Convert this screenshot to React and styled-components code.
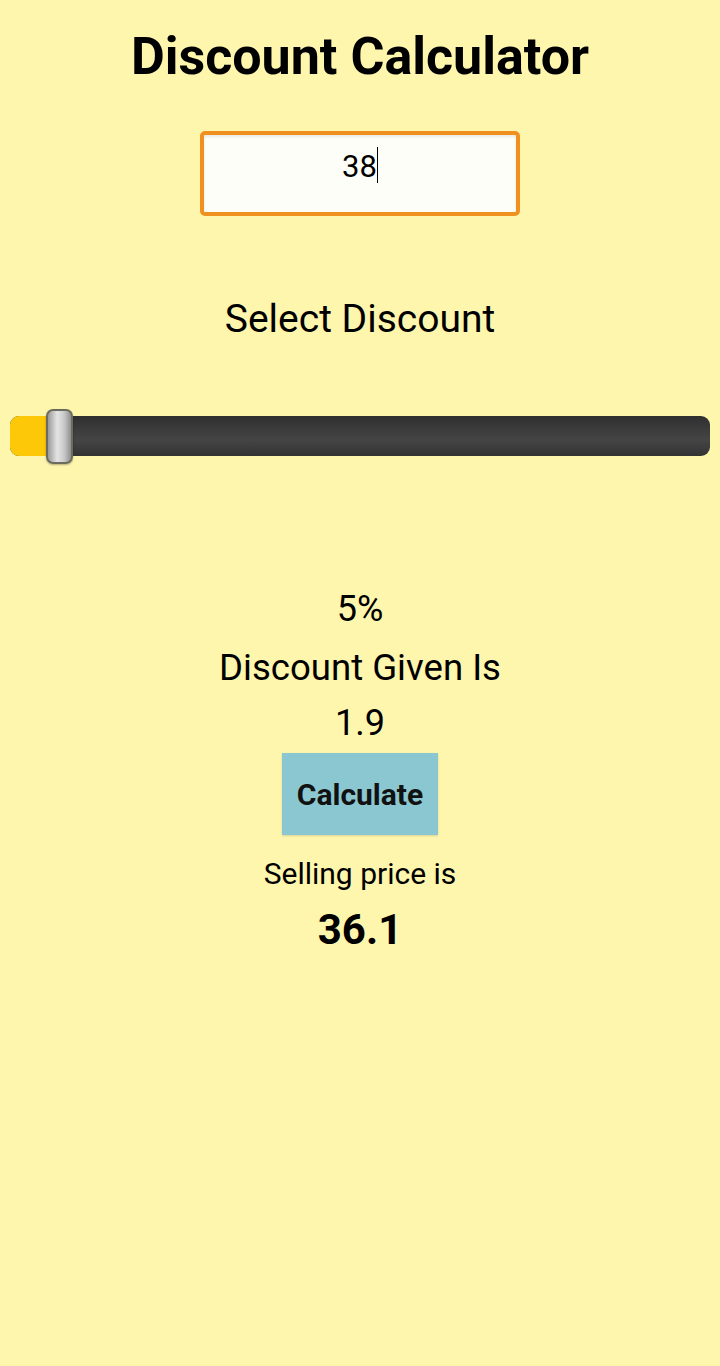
import styled, { createGlobalStyle } from "styled-components";

const GlobalStyle = createGlobalStyle`
  html, body {
    margin: 0;
    padding: 0;
    background: #fff6ae;
    font-family: Roboto, "Noto Sans", sans-serif;
    color: #000;
  }
`;

const Page = styled.div`
  min-height: 1366px;
  display: flex;
  flex-direction: column;
  align-items: center;
  padding-top: 26px;
  box-sizing: border-box;
`;

const Title = styled.h1`
  margin: 0;
  font-size: 52px;
  font-weight: 700;
  line-height: 62px;
`;

const AmountBox = styled.div`
  margin-top: 43px;
  width: 320px;
  height: 85px;
  box-sizing: border-box;
  border: 4px solid #f0901e;
  border-radius: 5px;
  background: #fefef8;
  box-shadow: inset 0 2px 3px rgba(0, 0, 0, 0.08);
  display: flex;
  align-items: center;
  justify-content: center;
  padding-bottom: 14px;
`;

const AmountText = styled.span`
  font-size: 31px;
  line-height: 34px;
`;

const Caret = styled.span`
  display: inline-block;
  width: 1px;
  height: 36px;
  background: #000;
  vertical-align: middle;
  margin-top: -4px;
`;

const Label = styled.div`
  margin-top: ${(p) => p.$top || 0}px;
  font-size: ${(p) => p.$size}px;
  font-weight: ${(p) => (p.$bold ? 700 : 400)};
  line-height: ${(p) => p.$line}px;
`;

const SliderWrap = styled.div`
  align-self: stretch;
  margin: 67px 10px 0;
  height: 56px;
  display: flex;
  align-items: center;
  position: relative;
`;

const Track = styled.div`
  flex: 1;
  height: 40px;
  border-radius: 9px;
  background: linear-gradient(#2f2f2f, #454545 60%, #333 100%);
  overflow: hidden;
  display: flex;
`;

const Fill = styled.div`
  height: 100%;
  background: #fdc808;
`;

const Thumb = styled.div`
  position: absolute;
  top: 1px;
  width: 27px;
  height: 55px;
  box-sizing: border-box;
  border: 2px solid #6b6b5e;
  border-radius: 7px;
  background: linear-gradient(90deg, #9a9a9a, #e4e4e4 40%, #c9c9c9 70%, #8f8f8f);
  box-shadow: 0 1px 2px rgba(0, 0, 0, 0.3);
`;

const CalcButton = styled.button`
  margin-top: 10px;
  width: 156px;
  height: 82px;
  border: none;
  background: #8ac7d0;
  font-family: inherit;
  font-size: 30px;
  font-weight: 700;
  color: #111;
  box-shadow: 0 1px 2px rgba(0, 0, 0, 0.15);
`;

export default function App() {
  const discount = 5;
  const fillWidth = 40;

  return (
    <>
      <GlobalStyle />
      <Page>
        <Title>Discount Calculator</Title>
        <AmountBox>
          <AmountText>38</AmountText>
          <Caret />
        </AmountBox>
        <Label $top={81} $size={39} $line={44}>
          Select Discount
        </Label>
        <SliderWrap>
          <Track>
            <Fill style={{ width: fillWidth }} />
          </Track>
          <Thumb style={{ left: fillWidth - 4 }} />
        </SliderWrap>
        <Label $top={125} $size={36} $line={40}>
          {discount}%
        </Label>
        <Label $top={18} $size={36.6} $line={42}>
          Discount Given Is
        </Label>
        <Label $top={14} $size={36} $line={40}>
          1.9
        </Label>
        <CalcButton>Calculate</CalcButton>
        <Label $top={21} $size={30} $line={36}>
          Selling price is
        </Label>
        <Label $top={14} $size={42} $line={48} $bold>
          36.1
        </Label>
      </Page>
    </>
  );
}
